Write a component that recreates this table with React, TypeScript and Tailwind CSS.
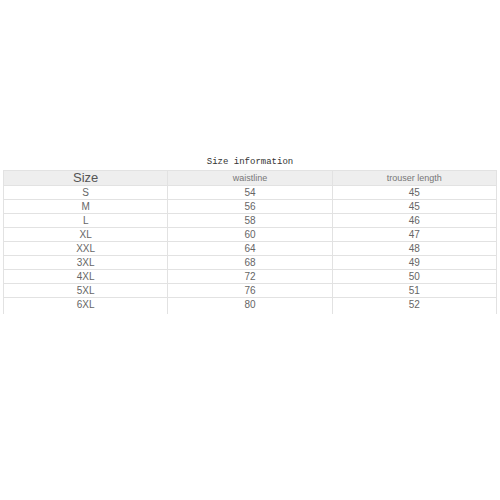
import React from 'react';

const rows = [
  ['S', '54', '45'],
  ['M', '56', '45'],
  ['L', '58', '46'],
  ['XL', '60', '47'],
  ['XXL', '64', '48'],
  ['3XL', '68', '49'],
  ['4XL', '72', '50'],
  ['5XL', '76', '51'],
  ['6XL', '80', '52'],
];

const App = () => {
  return (
    <div className="w-[500px] h-[500px] bg-white flex flex-col pt-[154px]">
      <div className="h-[16px] text-center text-[9px] leading-[16px] text-[#333] font-['Liberation_Mono',monospace]">
        Size information
      </div>
      <div className="ml-[3px] w-[494px] flex flex-col font-['Liberation_Sans',Arial,sans-serif] text-[#666]">
        <div className="grid grid-cols-3 h-[16px] bg-[#eeeeee] border-y border-l border-[#e2e2e2]">
          <div className="border-r border-[#e2e2e2] text-center text-[13px] leading-[14px] text-[#555]">Size</div>
          <div className="border-r border-[#e2e2e2] text-center text-[9px] leading-[14px] text-[#777]">waistline</div>
          <div className="border-r border-[#e2e2e2] text-center text-[9px] leading-[14px] text-[#777]">trouser length</div>
        </div>
        {rows.map((r, i) => (
          <div
            key={r[0]}
            className={
              i === rows.length - 1
                ? 'grid grid-cols-3 h-[16px] border-l border-[#e2e2e2]'
                : 'grid grid-cols-3 h-[14px] border-b border-l border-[#e2e2e2]'
            }
          >
            {r.map((c, j) => (
              <div key={j} className="border-r border-[#e2e2e2] text-center text-[10px] leading-[13px]">
                {c}
              </div>
            ))}
          </div>
        ))}
      </div>
    </div>
  );
};

export default App;
